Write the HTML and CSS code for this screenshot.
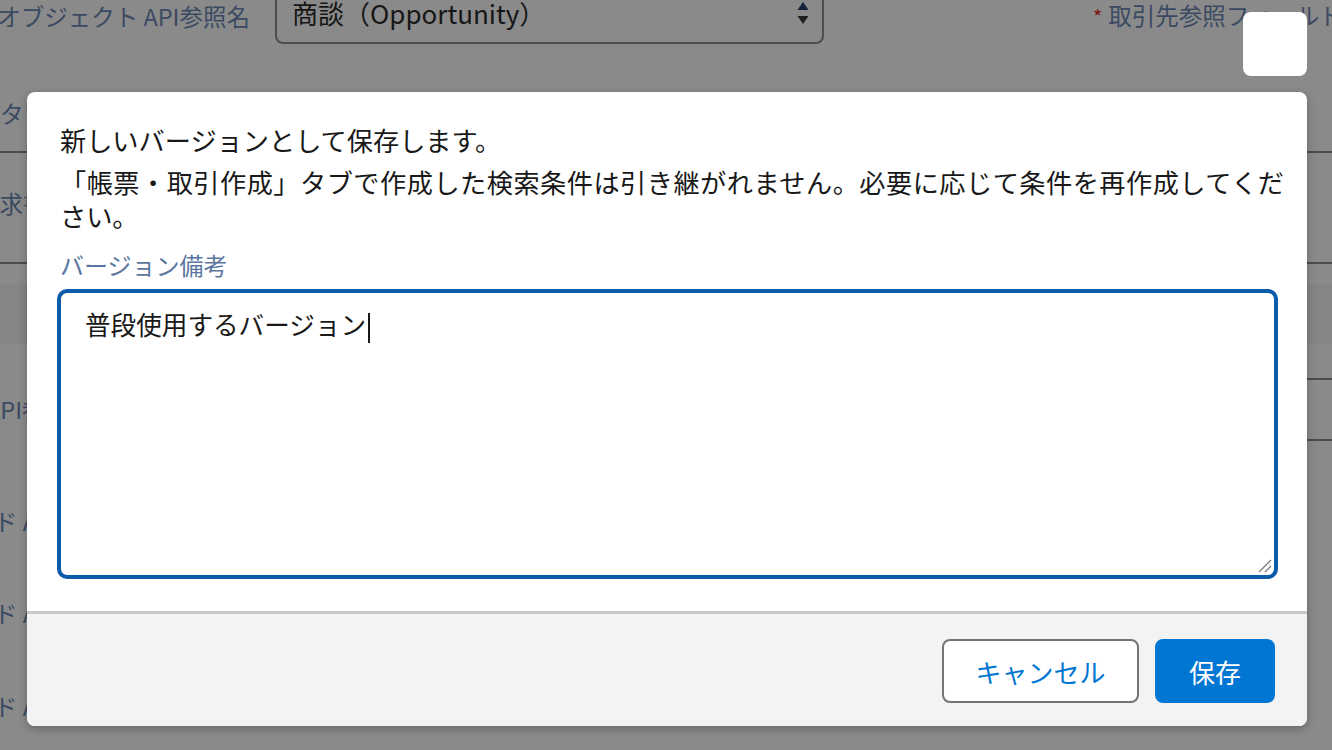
FILE: index.html
```html
<!DOCTYPE html>
<html lang="ja">
<head>
<meta charset="utf-8">
<title>バージョン保存</title>
<link rel="stylesheet" href="styles.css">
</head>
<body>
<div class="page">
  <div class="top-row">
    <div class="lbl-api"><span>オブジェクト API参照名</span></div>
    <div class="select">
      <span class="select-text">商談（Opportunity）</span>
      <svg class="arrows" width="12" height="26" viewBox="0 0 12 26">
        <path d="M6 3 L11.5 11 L0.5 11 Z" fill="#14213a"/>
        <path d="M0.5 17 L11.5 17 L6 25 Z" fill="#1e1e1e"/>
      </svg>
    </div>
    <div class="req"><span class="star">*</span>取引先参照フィールド</div>
  </div>
  <div class="row row-a"><span class="cut cut-a">タブ名</span></div>
  <div class="row row-b"><span class="cut cut-b">請求書</span></div>
  <div class="spacer"></div>
  <div class="band"></div>
  <div class="lower">
    <div class="left-col">
      <span class="cut cut-c t1">API参照名</span>
      <span class="cut cut-d t2">ド API</span>
      <span class="cut cut-d t3">ド API</span>
      <span class="cut cut-d t4">ド API</span>
    </div>
    <div class="right-col">
      <div class="rline r1"></div>
      <div class="rline r2"></div>
    </div>
  </div>
</div>

<button class="close-btn" type="button" aria-label="閉じる"></button>

<div class="modal">
  <div class="modal-body">
    <p class="msg msg-1">新しいバージョンとして保存します。</p>
    <p class="msg msg-2">「帳票・取引作成」タブで作成した検索条件は引き継がれません。必要に応じて条件を再作成してください。</p>
    <div class="field-label">バージョン備考</div>
    <div class="textarea">
      <span class="ta-text">普段使用するバージョン</span><span class="caret"></span>
      <svg class="grip" width="14" height="14" viewBox="0 0 14 14">
        <path d="M1 13 L13 1" stroke="#7a7a7a" stroke-width="1.3"/>
        <path d="M7 13 L13 7" stroke="#7a7a7a" stroke-width="1.3"/>
      </svg>
    </div>
  </div>
  <div class="modal-footer">
    <button class="btn btn-neutral" type="button">キャンセル</button>
    <button class="btn btn-brand" type="button">保存</button>
  </div>
</div>
</body>
</html>
```

FILE: styles.css
```css
* { box-sizing: border-box; }

body {
  margin: 0;
  width: 1332px;
  height: 750px;
  overflow: hidden;
  position: relative;
  background: #8a8a8a;
  font-family: "Noto Sans CJK JP", "Noto Sans", sans-serif;
}

/* ---------- dimmed background page ---------- */
.page {
  display: flex;
  flex-direction: column;
}

.top-row {
  display: flex;
  align-items: center;
  height: 64px;
  margin-top: -20px;
}

.lbl-api {
  flex: 0 0 250px;
  min-width: 0;
  display: flex;
  justify-content: flex-end;
  white-space: nowrap;
  font-size: 23.5px;
  line-height: 32px;
  color: #3b4a62;
  margin-top: 8px;
}

.select {
  flex: 0 0 549px;
  margin-left: 25px;
  height: 64px;
  border: 2px solid #4d4d4d;
  border-radius: 8px;
  display: flex;
  align-items: center;
  padding: 0 13px 0 15px;
  font-size: 26px;
  color: #161616;
}

.arrows {
  margin-left: auto;
  margin-top: 0;
}

.req {
  flex: 0 0 auto;
  margin-left: 269px;
  margin-top: 8px;
  white-space: nowrap;
  font-size: 23.5px;
  line-height: 32px;
  color: #3b4a62;
}

.star {
  color: #7d1212;
  font-size: 20px;
  margin-right: 6px;
}

.row {
  border-bottom: 2px solid #4b4b4b;
  font-size: 23.5px;
  line-height: 32px;
  color: #3b4a62;
  white-space: nowrap;
}

.row-a {
  height: 109px;
  padding-top: 53px;
}

.row-b {
  height: 111px;
  padding-top: 34px;
}

.cut-a { margin-left: 0; }
.cut-b { margin-left: -24px; }

.spacer { height: 20px; }

.band {
  height: 60px;
  background: #858585;
}

.lower {
  display: flex;
}

.left-col {
  display: flex;
  flex-direction: column;
  font-size: 23.5px;
  line-height: 32px;
  color: #3b4a62;
  white-space: nowrap;
}

.cut-c { margin-left: -14px; }
.cut-d { margin-left: -6px; }
.t1 { margin-top: 49px; }
.t2 { margin-top: 80px; }
.t3 { margin-top: 60px; }
.t4 { margin-top: 61px; }

.right-col {
  margin-left: auto;
  width: 600px;
  display: flex;
  flex-direction: column;
}

.rline {
  border-bottom: 2px solid #4b4b4b;
}

.r1 { height: 36px; }
.r2 { height: 61px; }

/* ---------- close button ---------- */
.close-btn {
  position: absolute;
  left: 1243px;
  top: 12px;
  width: 64px;
  height: 64px;
  border: 0;
  border-radius: 8px;
  background: #ffffff;
  padding: 0;
}

/* ---------- modal ---------- */
.modal {
  position: absolute;
  left: 27px;
  top: 92px;
  width: 1280px;
  height: 634px;
  border-radius: 8px;
  overflow: hidden;
  background: #ffffff;
  display: flex;
  flex-direction: column;
  box-shadow: 0 3px 8px rgba(0, 0, 0, 0.25);
}

.modal-body {
  padding: 31px 29px 32px 30px;
}

.msg {
  margin: 0 -6px 0 3px;
  font-size: 26.2px;
  line-height: 34px;
  color: #181818;
  text-align: justify;
}

.msg-1 { margin-bottom: 8px; }

.field-label {
  margin: 16px 3px 8px;
  font-size: 24px;
  line-height: 32px;
  color: #5a76a0;
}

.textarea {
  position: relative;
  height: 290px;
  border: 4px solid #0b5cab;
  border-radius: 10px;
  padding: 14px 24px;
  font-size: 25.6px;
  line-height: 34px;
  color: #181818;
}

.caret {
  display: inline-block;
  width: 2px;
  height: 30px;
  background: #181818;
  vertical-align: middle;
  margin-left: 2px;
}

.grip {
  position: absolute;
  right: 2px;
  bottom: 2px;
}

.modal-footer {
  flex: 1;
  border-top: 3px solid #c9c9c9;
  background: #f3f3f3;
  display: flex;
  justify-content: flex-end;
  align-items: flex-start;
  gap: 16px;
  padding: 25px 32px 0 0;
}

.btn {
  height: 64px;
  border-radius: 8px;
  font-family: inherit;
  font-size: 26px;
  padding: 0;
  cursor: pointer;
}

.btn-neutral {
  width: 197px;
  background: #ffffff;
  border: 2px solid #747474;
  color: #0176d3;
}

.btn-brand {
  width: 120px;
  background: #0176d3;
  border: 2px solid #0176d3;
  color: #ffffff;
}
```
